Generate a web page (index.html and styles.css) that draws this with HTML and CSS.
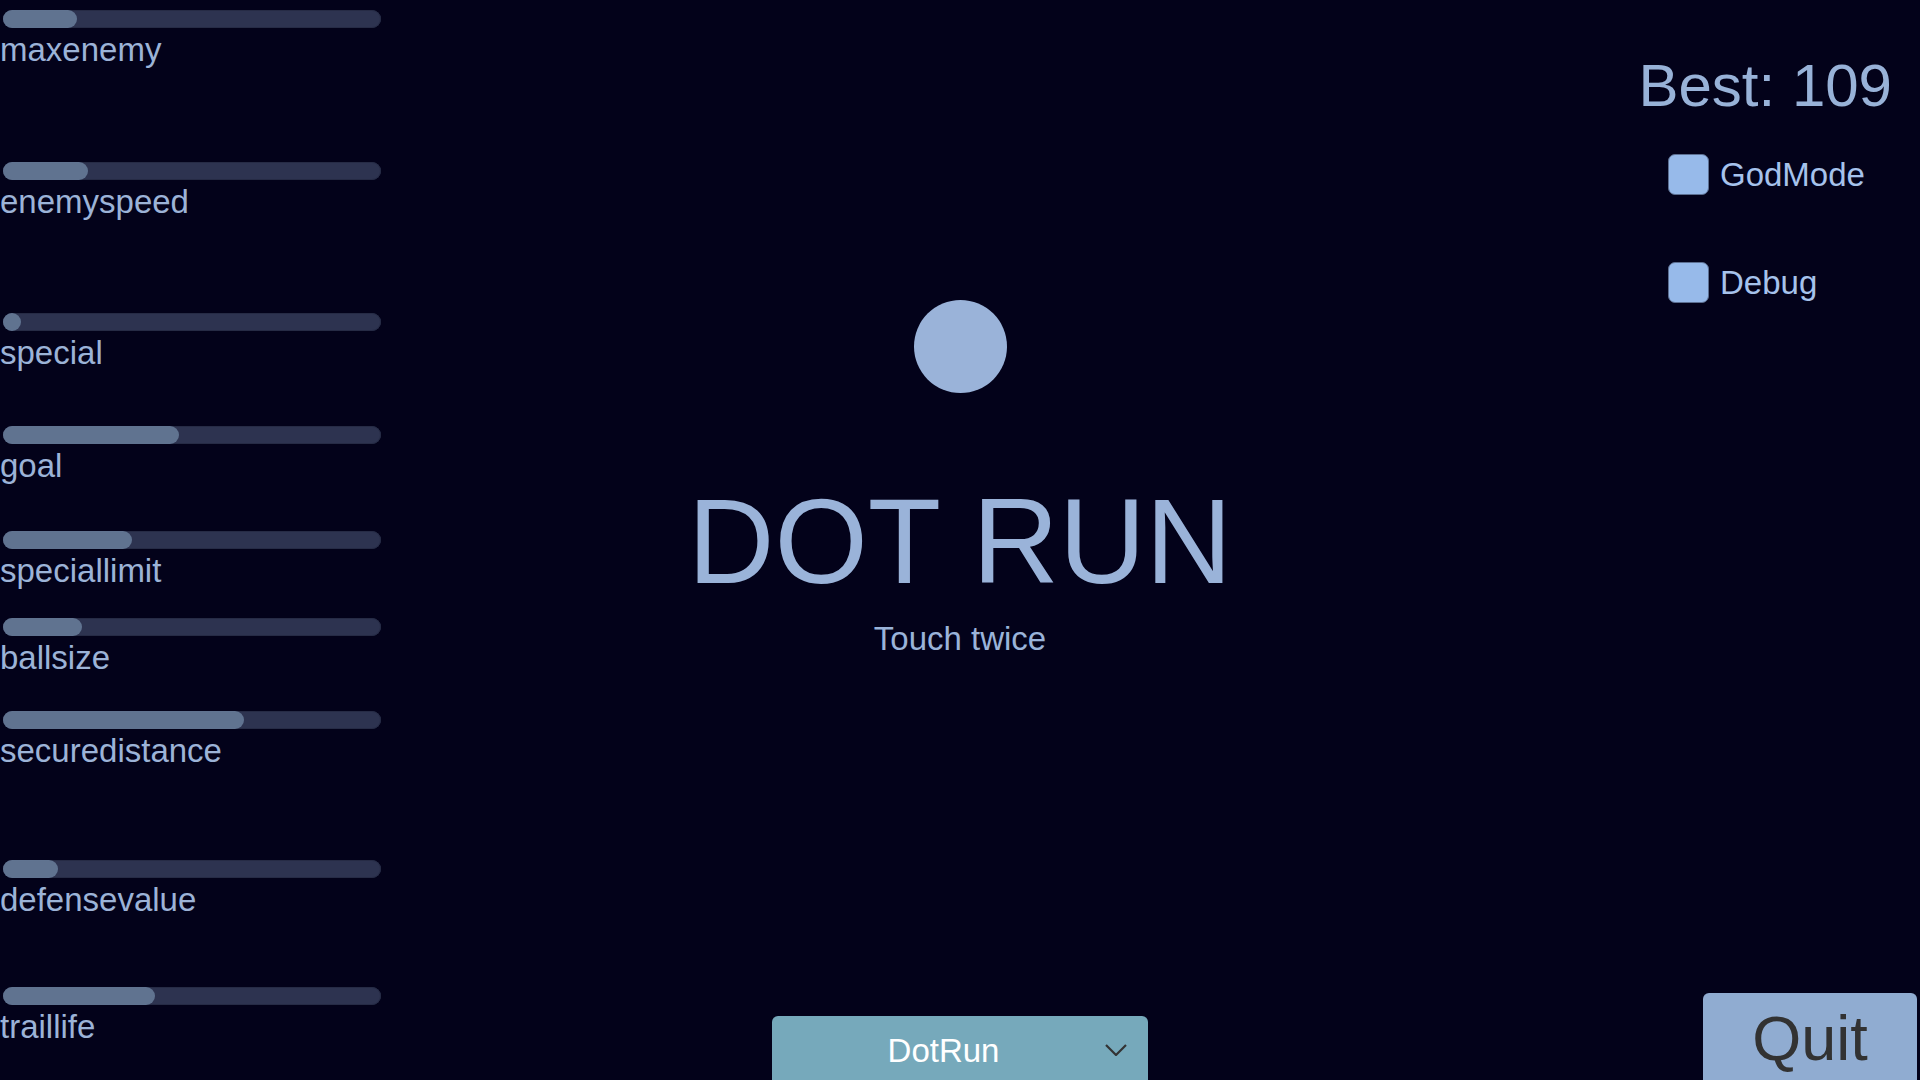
FILE: index.html
```html
<!DOCTYPE html>
<html lang="en">
<head>
    <meta charset="UTF-8">
    <meta name="viewport" content="width=device-width, initial-scale=1.0">
    <title>DOT RUN</title>
    <link rel="stylesheet" href="styles.css">
</head>
<body>
    <div class="screen">
        <!-- tuning sliders -->
        <div class="sliders">
            <div class="slider">
                <div class="track"><div class="fill" style="width: 19.6%"></div></div>
                <div class="label">maxenemy</div>
            </div>
            <div class="slider">
                <div class="track"><div class="fill" style="width: 22.5%"></div></div>
                <div class="label">enemyspeed</div>
            </div>
            <div class="slider">
                <div class="track"><div class="fill" style="width: 4.6%"></div></div>
                <div class="label">special</div>
            </div>
            <div class="slider">
                <div class="track"><div class="fill" style="width: 46.6%"></div></div>
                <div class="label">goal</div>
            </div>
            <div class="slider">
                <div class="track"><div class="fill" style="width: 34.1%"></div></div>
                <div class="label">speciallimit</div>
            </div>
            <div class="slider">
                <div class="track"><div class="fill" style="width: 20.9%"></div></div>
                <div class="label">ballsize</div>
            </div>
            <div class="slider">
                <div class="track"><div class="fill" style="width: 63.8%"></div></div>
                <div class="label">securedistance</div>
            </div>
            <div class="slider">
                <div class="track"><div class="fill" style="width: 14.6%"></div></div>
                <div class="label">defensevalue</div>
            </div>
            <div class="slider">
                <div class="track"><div class="fill" style="width: 40.2%"></div></div>
                <div class="label">traillife</div>
            </div>
        </div>

        <!-- title area -->
        <div class="center">
            <div class="dot"></div>
            <h1 class="title">DOT RUN</h1>
            <div class="hint">Touch twice</div>
            <div class="dropdown">
                <span class="dropdown-text">DotRun</span>
                <svg class="chevron" width="22" height="12" viewBox="0 0 22 12">
                    <polyline points="1,1 11,11 21,1" fill="none" stroke="#333333" stroke-width="2.2"/>
                </svg>
            </div>
        </div>

        <!-- score and toggles -->
        <div class="side">
            <div class="best">Best: 109</div>
            <div class="toggles">
                <div class="toggle">
                    <span class="box"></span>
                    <span class="toggle-label">GodMode</span>
                </div>
                <div class="toggle">
                    <span class="box"></span>
                    <span class="toggle-label">Debug</span>
                </div>
            </div>
            <button class="quit">Quit</button>
        </div>
    </div>
</body>
</html>
```

FILE: styles.css
```css
html, body {
    margin: 0;
    padding: 0;
}

body {
    background-color: #03021a;
    color: #9cb3d7;
    font-family: "Liberation Sans", Arial, sans-serif;
    overflow: hidden;
}

.screen {
    width: 1920px;
    height: 1080px;
    display: grid;
    grid-template-columns: 400px 1fr 400px;
    overflow: hidden;
}

/* sliders */

.sliders {
    display: grid;
    grid-template-rows: 152px 151px 113px 105px 87px 93px 149px 127px auto;
    padding-top: 10px;
    padding-left: 3px;
}

.track {
    width: 378px;
    height: 18px;
    border-radius: 9px;
    background-color: #2d3350;
    box-shadow: inset 0 0 0 1px #262b45;
}

.fill {
    height: 18px;
    min-width: 18px;
    border-radius: 9px;
    background-color: #607390;
}

.label {
    margin-top: 5px;
    margin-left: -3px;
    font-size: 33px;
    line-height: 1;
    color: #9cb3d7;
}

/* center */

.center {
    display: flex;
    flex-direction: column;
    align-items: center;
    overflow: hidden;
}

.dot {
    width: 93px;
    height: 93px;
    margin-top: 300px;
    border-radius: 50%;
    background-color: #9ab3d9;
}

.title {
    margin: 88px 0 0;
    font-size: 120px;
    font-weight: normal;
    line-height: 1;
    color: #9ab3d9;
}

.hint {
    margin-top: 21px;
    font-size: 33px;
    line-height: 1;
    color: #9ab3d9;
}

.dropdown {
    margin-top: auto;
    width: 376px;
    height: 90px;
    margin-bottom: -26px;
    box-sizing: border-box;
    padding: 18px 21px 0 10px;
    display: flex;
    align-items: flex-start;
    background-color: #76a9bb;
    border-radius: 6px;
}

.dropdown-text {
    flex: 1;
    text-align: center;
    font-size: 33px;
    line-height: 1;
    color: #ffffff;
}

.chevron {
    margin-top: 10px;
}

/* right side */

.side {
    display: flex;
    flex-direction: column;
    align-items: flex-end;
    overflow: hidden;
}

.best {
    margin-top: 56px;
    padding-right: 28px;
    font-size: 60px;
    line-height: 1;
    color: #98b2d8;
}

.toggles {
    align-self: flex-start;
    margin-top: 38px;
    padding-left: 148px;
    display: flex;
    flex-direction: column;
    gap: 67px;
}

.toggle {
    display: flex;
    align-items: center;
    gap: 11px;
}

.box {
    width: 41px;
    height: 41px;
    box-sizing: border-box;
    border-radius: 7px;
    background-color: #97baea;
    border: 1px solid #5c6f91;
}

.toggle-label {
    font-size: 33px;
    line-height: 1;
    color: #a6c2ec;
}

.quit {
    margin-top: auto;
    margin-right: 3px;
    margin-bottom: -23px;
    width: 214px;
    height: 110px;
    padding: 14px 0 0;
    display: flex;
    justify-content: center;
    align-items: flex-start;
    font-family: "Liberation Sans", Arial, sans-serif;
    font-size: 63px;
    line-height: 1;
    color: #323232;
    background-color: #90acd1;
    border: none;
    border-radius: 6px;
}
```
